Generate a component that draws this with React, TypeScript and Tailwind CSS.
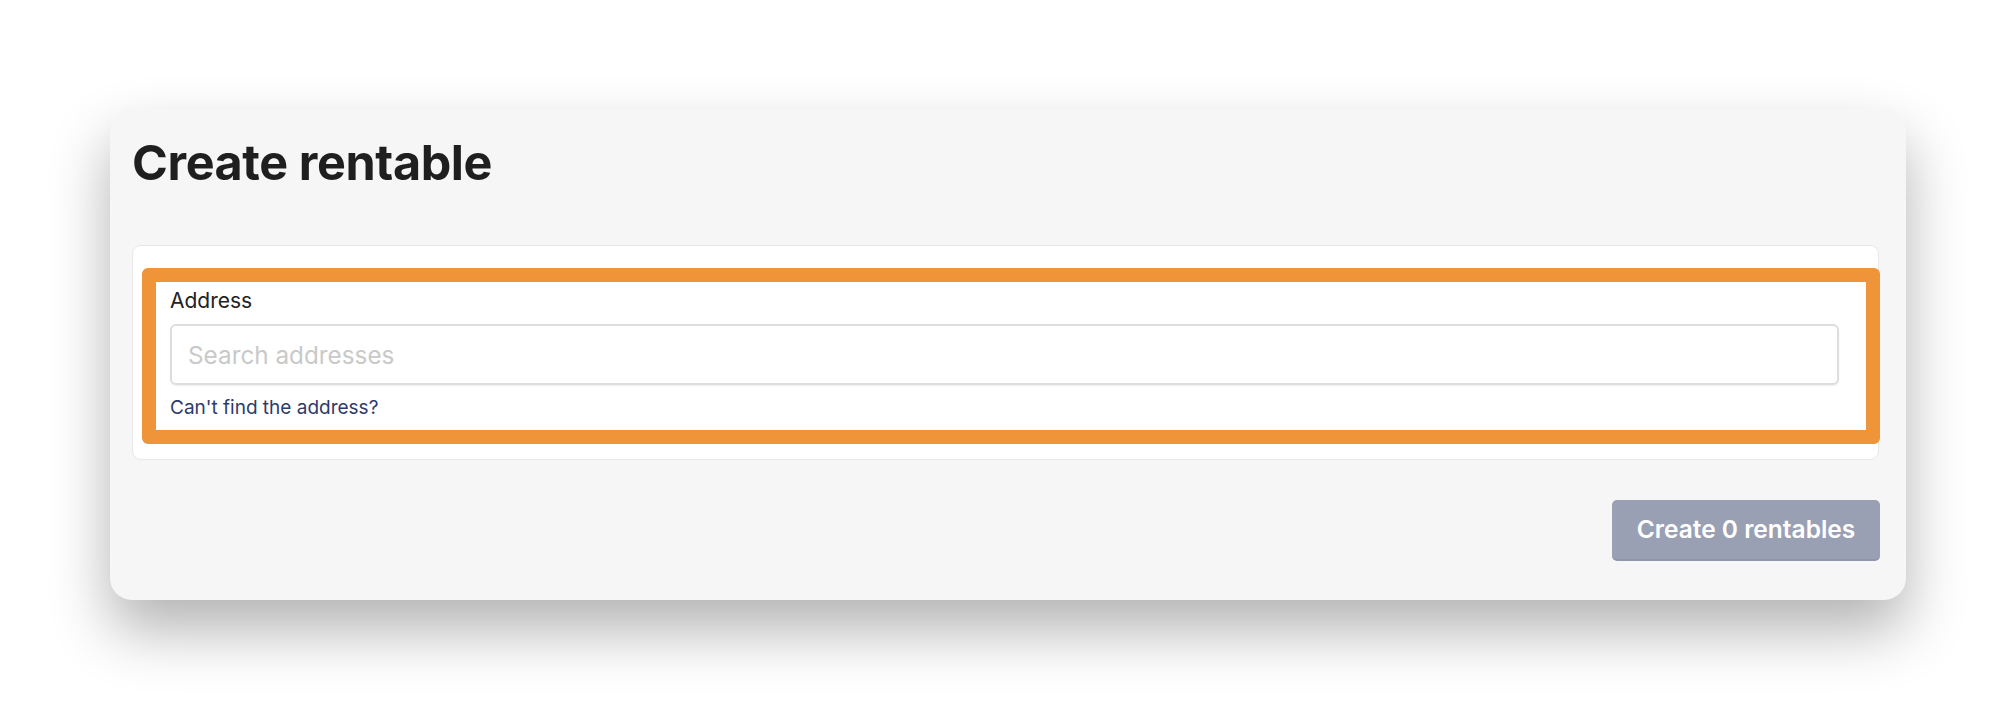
export default function App() {
  return (
    <div className="min-h-[710px] w-[2016px] bg-white font-['Inter','Liberation_Sans',sans-serif] pt-[109px] pl-[110px]">
      {/* ── CARD ── */}
      <div className="w-[1796px] h-[491px] rounded-[22px] bg-[#f6f6f6] shadow-[0_30px_60px_rgba(0,0,0,0.3)] pl-[22px] pt-[30px]">
        <h1 className="text-[48.5px] leading-[48px] font-bold tracking-[-0.4px] text-[#1f1f1f]">Create rentable</h1>

        <div className="mt-[58px] w-[1747px] h-[215px] rounded-[9px] border border-[#e8e8e8] bg-white pt-[22px] pl-[9px]">
          <div className="w-[1738px] h-[176px] rounded-[6px] border-[14px] border-[#f0943a] pl-[14px] pt-[6px]">
            <label className="block text-[21px] leading-[26px] text-[#222]">Address</label>
            <div className="mt-[10px] w-[1669px] h-[61px] rounded-[6px] border-2 border-[#dddddd] shadow-[0_1px_2px_rgba(0,0,0,0.07)] flex items-center px-[16px] pt-[2px]">
              <input
                placeholder="Search addresses"
                className="w-full outline-none text-[24.3px] placeholder:text-[#c9c9c9] bg-transparent"
              />
            </div>
            <a className="block mt-[11px] text-[19px] leading-[24px] text-[#2d3b6a]">Can't find the address?</a>
          </div>
        </div>

        <div className="flex justify-end w-[1748px] mt-[40px]">
          <button className="h-[61px] w-[268px] rounded-[5px] bg-[#9aa0b3] border-b-2 border-[#9197aa] text-white text-[24.5px] font-semibold">
            Create 0 rentables
          </button>
        </div>
      </div>
    </div>
  );
}
